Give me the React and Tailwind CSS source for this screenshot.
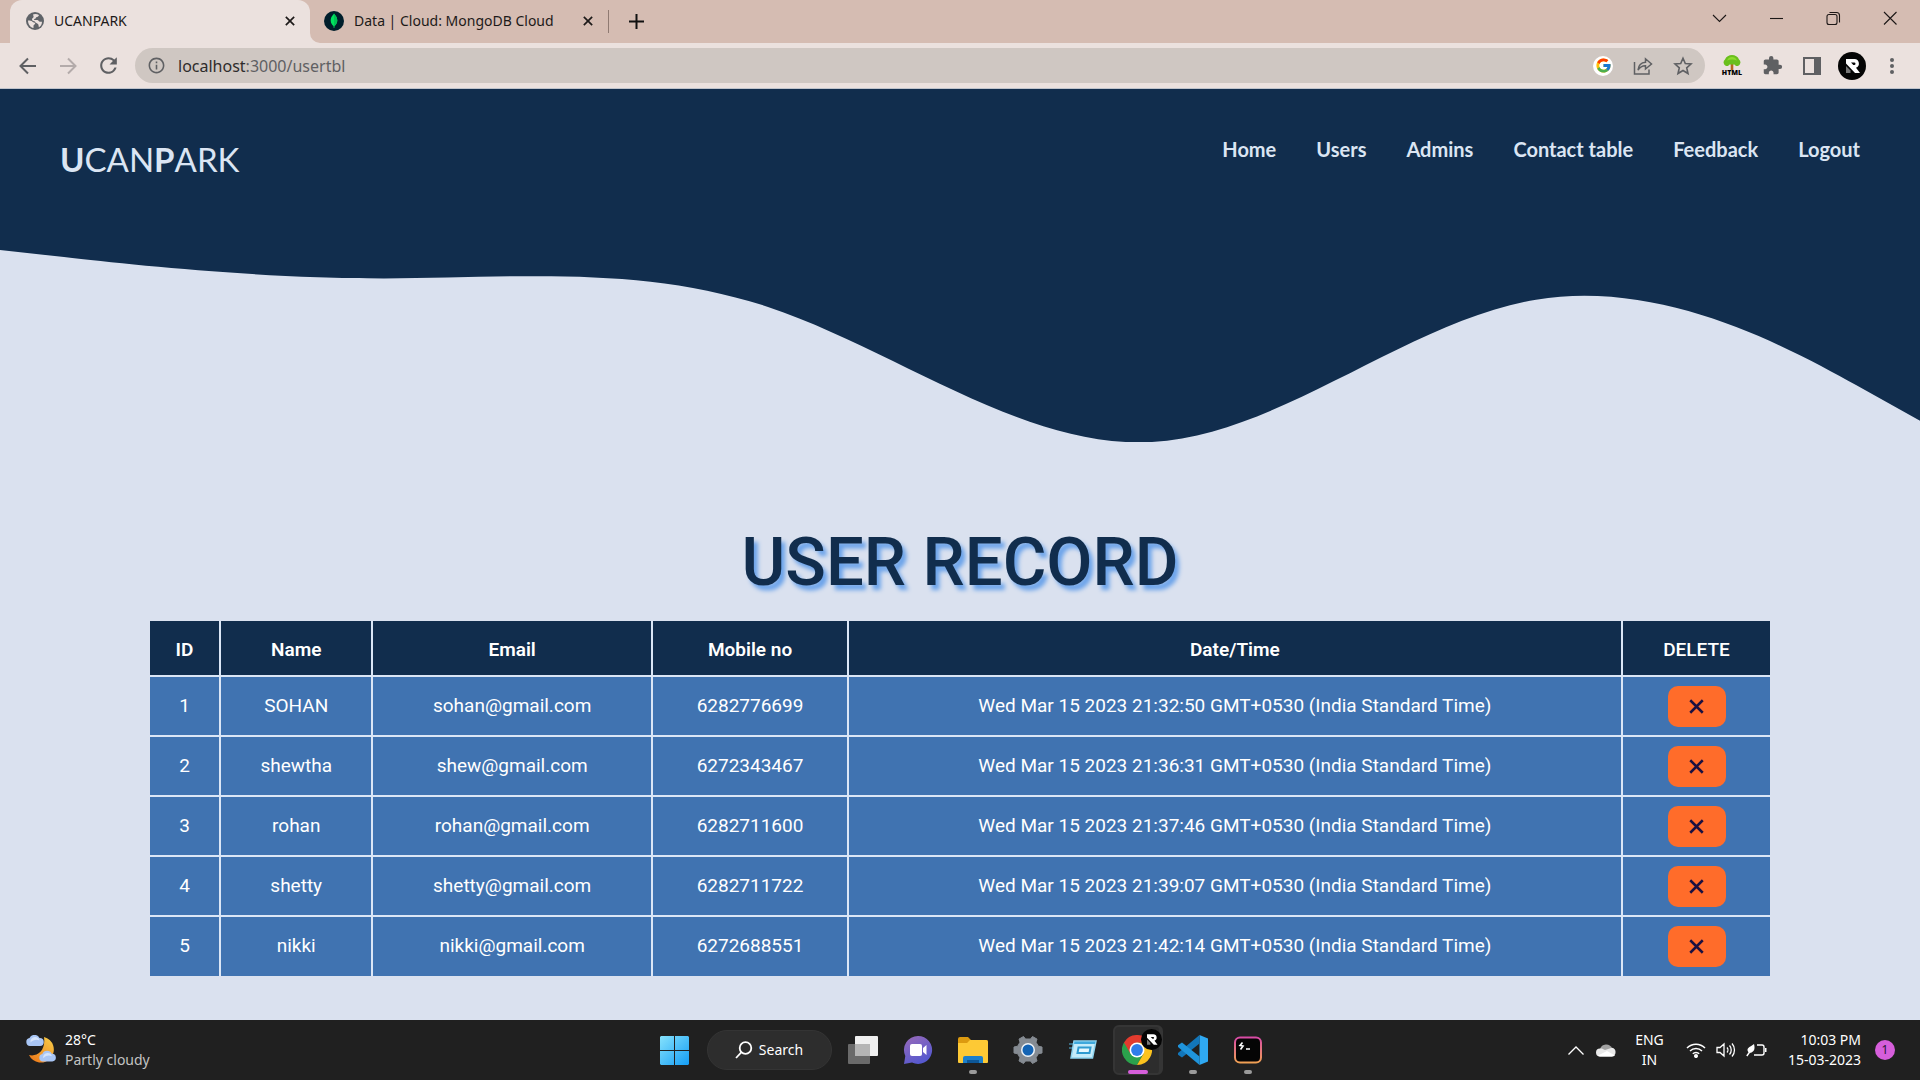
import React from "react";
import { FcGoogle } from "react-icons/fc";
import { MdExtension, MdRefresh, MdInfoOutline } from "react-icons/md";

const users = [
  { id: 1, name: "SOHAN", email: "sohan@gmail.com", mobile: "6282776699", time: "21:32:50" },
  { id: 2, name: "shewtha", email: "shew@gmail.com", mobile: "6272343467", time: "21:36:31" },
  { id: 3, name: "rohan", email: "rohan@gmail.com", mobile: "6282711600", time: "21:37:46" },
  { id: 4, name: "shetty", email: "shetty@gmail.com", mobile: "6282711722", time: "21:39:07" },
  { id: 5, name: "nikki", email: "nikki@gmail.com", mobile: "6272688551", time: "21:42:14" },
];

const links = ["Home", "Users", "Admins", "Contact table", "Feedback", "Logout"];

function Cross({ size = 12, width = 2, color = "currentColor" }) {
  return (
    <svg width={size} height={size} viewBox="0 0 12 12" fill="none" stroke={color} strokeWidth={width}>
      <path d="M1 1l10 10M11 1L1 11" />
    </svg>
  );
}

function Globe() {
  return (
    <svg width="18" height="18" viewBox="0 0 18 18">
      <circle cx="9" cy="9" r="9" fill="#5f6368" />
      <path d="M2 8.500c2 0 3.500.2 4.500 1.200.8.900 2.500.3 2.700 1.500.2 1.300-1.700 1.300-1.700 2.600V16C4.500 15.500 2 12.500 2 8.500z" fill="#ebe1de" />
      <path d="M7 2.500C8 2 11 1.700 13 3c-.5 1-.8 1.800-2 2-1.400.2-.8 1.500-2 1.700-1.200.2-1.200 1.300-.2 1.300h2.400c1.500 0 1.600 1.800 2.800 1.800H16c0 2.700-1.300 4.500-3 5.500-.6-1-.2-2.300-1-3.200-1-1-2.400-.8-2.800-2C8.800 8.700 6 9.400 6 7.500 6 6 7.600 6 7.600 4.500z" fill="#ebe1de" />
    </svg>
  );
}

function RMark({ size }) {
  return (
    <svg width={size} height={size} viewBox="0 0 28 28">
      <circle cx="14" cy="14" r="14" fill="#050505" />
      <path d="M8 7h8.500a4.500 4.500 0 0 1 1.500 8.700L22 21h-5L8 11.500z" fill="#fff" />
      <path d="M13 10.500h3.200a1.300 1.300 0 0 1 0 2.600h-.9z" fill="#050505" />
      <path d="M8 14l4.500 4.500V21H8z" fill="#777" />
    </svg>
  );
}

function Tab({ icon, title, active }) {
  return (
    <div
      className={
        active
          ? "relative flex w-[300px] items-center rounded-t-xl bg-[#ebe1de] pr-3 pb-0.5 pl-4"
          : "flex w-[298px] items-center pr-3 pb-0.5 pl-3.5"
      }
    >
      {icon}
      <span className="ml-2.5 flex-1 truncate text-sm">{title}</span>
      <button aria-label={"Close " + title} className="grid size-4 place-items-center">
        <Cross size={10} />
      </button>
      {active && (
        <svg className="absolute bottom-0 left-full" width="10" height="10" viewBox="0 0 10 10" fill="#ebe1de">
          <path d="M0 0v10h10A10 10 0 0 1 0 0z" />
        </svg>
      )}
    </div>
  );
}

function Tool({ label, children }) {
  return (
    <button aria-label={label} className="grid h-9 w-10 place-items-center">
      {children}
    </button>
  );
}

function WindowButton({ label, children }) {
  return (
    <button aria-label={label} className="grid h-9 w-[57px] place-items-center">
      <svg width="16" height="16" viewBox="0 0 16 16" fill="none" stroke="#1c1716" strokeWidth="1.100">
        {children}
      </svg>
    </button>
  );
}

function Browser() {
  return (
    <div className="font-['Noto_Sans',sans-serif] text-[#1d1a19]">
      <div className="flex h-[43px] bg-[#d5bcb2] pl-2.5">
        <Tab active title="UCANPARK" icon={<Globe />} />
        <Tab
          title="Data | Cloud: MongoDB Cloud"
          icon={
            <svg width="20" height="20" viewBox="0 0 20 20">
              <circle cx="10" cy="10" r="10" fill="#001e2b" />
              <path d="M10 2.500c1 1.700 3.300 3.300 3.300 7 0 3-1.800 4.600-2.900 5.500L10.200 17h-.5l-.2-2C8.400 14.100 6.700 12.500 6.700 9.500c0-3.700 2.300-5.300 3.300-7z" fill="#00e35f" />
              <path d="M10 2.500V17h.2l.2-2c1.100-.9 2.900-2.500 2.900-5.500 0-3.700-2.300-5.300-3.300-7z" fill="#00c455" />
            </svg>
          }
        />
        <span className="my-2.5 w-px bg-[#8f7a72]" />
        <button aria-label="New tab" className="grid w-[54px] place-items-center">
          <svg width="15" height="15" viewBox="0 0 15 15" stroke="#111" strokeWidth="2">
            <path d="M7.500 0v15M0 7.500h15" />
          </svg>
        </button>
        <div className="ml-auto flex pr-0.5">
          <WindowButton label="Search tabs"><path d="M2 5l6.500 6.500L15 5" /></WindowButton>
          <WindowButton label="Minimize"><path d="M2 8.500h13" /></WindowButton>
          <WindowButton label="Restore">
            <rect x="2" y="4.500" width="10" height="10" rx="2" />
            <path d="M4.500 2.500h7a3 3 0 0 1 3 3v7" />
          </WindowButton>
          <WindowButton label="Close"><path d="M2 2l12.500 12.500M14.500 2L2 14.500" /></WindowButton>
        </div>
      </div>
      <div className="flex h-[46px] items-center border-b border-[#bfc3cb] bg-[#ebe1de] px-2 text-[#5f6063]">
        <Tool label="Back">
          <svg width="18" height="18" viewBox="0 0 18 18" fill="none" stroke="currentColor" strokeWidth="2"><path d="M17 9H2M9 1.500L1.500 9 9 16.500" /></svg>
        </Tool>
        <Tool label="Forward">
          <svg width="18" height="18" viewBox="0 0 18 18" fill="none" stroke="#b3abaa" strokeWidth="2"><path d="M1 9h15M9 1.500L16.500 9 9 16.500" /></svg>
        </Tool>
        <Tool label="Reload"><MdRefresh size={25} /></Tool>
        <div className="ml-[7px] flex h-[35px] flex-1 items-center rounded-full bg-[#cfc7c2] pr-0.5">
          <MdInfoOutline size={19} className="ml-3 shrink-0" />
          <div className="ml-3 flex-1 text-base">
            <span className="text-[#2e2c2c]">localhost</span>:3000/usertbl
          </div>
          <Tool label="Search with Google">
            <span className="grid size-5 place-items-center rounded-full bg-white"><FcGoogle size={17} /></span>
          </Tool>
          <Tool label="Share">
            <svg width="20" height="20" viewBox="0 0 20 20" fill="none" stroke="currentColor" strokeWidth="1.500">
              <path d="M1.500 6v12H16v-4.500" />
              <path d="M5 14c.5-5 3.500-7.500 7.500-7.800V2.800L18.500 8l-6 5V9.800C9.500 9.700 7 11 5 14z" />
            </svg>
          </Tool>
          <Tool label="Bookmark">
            <svg width="20" height="20" viewBox="0 0 20 20" fill="none" stroke="currentColor" strokeWidth="1.600">
              <path d="M10 2.200l2.300 5.300 5.700.5-4.300 3.800 1.300 5.700-5-3-5 3 1.300-5.700L2 8l5.700-.5z" />
            </svg>
          </Tool>
        </div>
        <div className="ml-[7px] flex items-center">
          <button aria-label="HTML Tree extension" className="flex h-9 w-10 flex-col items-center justify-center">
            <svg width="20" height="15" viewBox="0 0 20 15">
              <path d="M8.700 7h2.600v8H8.700z" fill="#b5651d" />
              <path d="M4 11a3.800 3.800 0 0 1-1-6.500C4 1.500 7 0 10 0s6 1.500 7 4.500A3.800 3.800 0 0 1 16 11c-2 .4-3-.6-3.500-1.500h-5C7 10.400 6 11.400 4 11z" fill="#6abf1c" />
              <path d="M5 5.500C6 3 8 2 10 2s4 1 5 3.500c-3-1.200-7-1.200-10 0z" fill="#8ddb2e" />
            </svg>
            <span className="text-[7px] leading-[6px] font-black text-black">HTML</span>
          </button>
          <Tool label="Extensions"><MdExtension size={21} /></Tool>
          <Tool label="Side panel">
            <svg width="18" height="18" viewBox="0 0 18 18"><path d="M1 1h16v16H1z" fill="none" stroke="currentColor" strokeWidth="2" /><path d="M11 1h6v16h-6z" fill="currentColor" /></svg>
          </Tool>
          <Tool label="Profile"><RMark size={28} /></Tool>
          <Tool label="Menu">
            <svg width="4" height="18" viewBox="0 0 4 18" fill="currentColor"><circle cx="2" cy="3" r="2" /><circle cx="2" cy="9" r="2" /><circle cx="2" cy="15" r="2" /></svg>
          </Tool>
        </div>
      </div>
    </div>
  );
}

const headings = ["ID", "Name", "Email", "Mobile no", "Date/Time", "DELETE"];

function Page() {
  return (
    <main className="flex-1 bg-[#dae1ef] pb-11 font-[Roboto,sans-serif]">
      <header className="flex h-[129px] items-start justify-between bg-[#112d4d] px-15 font-[Lato,sans-serif] text-[#dbe5f3]">
        <a href="#home" className="mt-12 text-[33px] leading-[44px]">
          <b>U</b>CAN<b>P</b>ARK
        </a>
        <nav className="mt-12 flex gap-10 text-xl leading-6 font-bold">
          {links.map((l) => (
            <a key={l} href={"#" + l.toLowerCase().replace(" ", "-")}>{l}</a>
          ))}
        </nav>
      </header>
      <svg className="block w-full" viewBox="0 40 1440 168" fill="#112d4d" aria-hidden="true">
        <path d="M0 64L48 69.300C96 74.700 192 85.300 288 85.300S480 74.700 576 106.700C672 138.700 768 213.300 864 208S1056 117.300 1152 101.300C1248 85.300 1344 138.700 1392 165.300L1440 192V39H0z" />
      </svg>
      <h1 className="mt-20 text-center text-[67px] leading-20 font-medium text-[#112d4d] [text-shadow:4px_5px_4px_#6ba3ea]">
        USER RECORD
      </h1>
      <table className="mx-auto mt-[19px] w-[84.4%] table-fixed border-collapse text-center text-[19px] text-white">
        <colgroup>
          <col className="w-[4.35%]" />
          <col className="w-[9.38%]" />
          <col className="w-[17.27%]" />
          <col className="w-[12.09%]" />
          <col className="w-[47.75%]" />
          <col className="w-[9.16%]" />
        </colgroup>
        <thead>
          <tr className="h-[55px] divide-x-2 divide-[#dbe6f6] bg-[#112d4d]">
            {headings.map((h) => (
              <th key={h} scope="col" className={h === "DELETE" ? "pt-1 font-medium" : "pt-1 font-semibold"}>{h}</th>
            ))}
          </tr>
        </thead>
        <tbody>
          {users.map((u) => (
            <tr key={u.id} className="h-[60px] divide-x-2 divide-[#dbe6f6] border-t-2 border-[#dbe6f6] bg-[#4073b1]">
              <td>{u.id}</td>
              <td>{u.name}</td>
              <td>{u.email}</td>
              <td>{u.mobile}</td>
              <td>Wed Mar 15 2023 {u.time} GMT+0530 (India Standard Time)</td>
              <td>
                <button aria-label={"Delete " + u.name} className="mx-auto grid h-[41px] w-[58px] place-items-center rounded-[10px] bg-[#ff6c2a]">
                  <Cross size={15} width={2} color="#1b1140" />
                </button>
              </td>
            </tr>
          ))}
        </tbody>
      </table>
    </main>
  );
}

function TaskIcon({ label, dot, children }) {
  return (
    <button aria-label={label} className="relative grid h-15 w-[55px] place-items-center">
      {children}
      {dot && <span className="absolute bottom-1.5 left-1/2 h-1 w-2 -translate-x-1/2 rounded-full bg-[#9a9a9a]" />}
    </button>
  );
}

function SmallCloud({ x, y, s = 1 }) {
  return (
    <g transform={`translate(${x} ${y}) scale(${s})`}>
      <path d="M4 11a4 4 0 0 1-.5-7.900A5.500 5.500 0 0 1 13.500 3 4 4 0 0 1 14 11z" fill="#a9c6f5" />
      <path d="M4.500 7.500A4.500 4.500 0 0 1 9 2a4.500 4.500 0 0 1 4.500 3.500c-3-1.200-6-.8-9 2z" fill="#d5e4fc" />
    </g>
  );
}

function Taskbar() {
  return (
    <footer className="grid h-15 grid-cols-[1fr_auto_1fr] bg-[#202020] font-['Noto_Sans',sans-serif] text-sm text-white">
      <button className="flex items-center justify-self-start pl-[26px] text-left leading-5">
        <svg width="30" height="30" viewBox="0 0 30 30">
          <defs>
            <linearGradient id="moon" x1="1" y1="0" x2="0.300" y2="1">
              <stop stopColor="#f7d04a" />
              <stop offset="1" stopColor="#ee7f1d" />
            </linearGradient>
          </defs>
          <path d="M18 2a13 13 0 1 1-15 18c8 2 17-4 15-18z" fill="url(#moon)" />
          <SmallCloud x={0} y={0} />
          <SmallCloud x={13} y={16} s={0.95} />
        </svg>
        <span className="ml-[9px]">
          <span className="block">28°C</span>
          <span className="block text-[#c3c3c3]">Partly cloudy</span>
        </span>
      </button>

      <div className="flex items-center pl-0.5">
        <TaskIcon label="Start">
          <svg width="29" height="29" viewBox="0 0 29 29">
            <defs>
              <linearGradient id="win" x1="0" y1="0" x2="1" y2="1">
                <stop stopColor="#86e2fc" />
                <stop offset="1" stopColor="#149df5" />
              </linearGradient>
            </defs>
            <path d="M1 0h13v14H0V1zM15 0h13l1 1v13H15zM0 15h14v14H1l-1-1zM15 15h14v13l-1 1H15z" fill="url(#win)" />
          </svg>
        </TaskIcon>
        <button className="mr-1 ml-[5px] flex h-10 w-[125px] items-center justify-center rounded-full border border-[#343434] bg-[#2d2d2d]">
          <svg width="18" height="18" viewBox="0 0 18 18" fill="none" stroke="#fff" strokeWidth="1.800">
            <circle cx="10.500" cy="7" r="5.800" />
            <path d="M6.500 11.200L1 17" />
          </svg>
          <span className="ml-1.5">Search</span>
        </button>
        <TaskIcon label="Task view">
          <svg width="30" height="28" viewBox="0 0 30 28">
            <rect x="7" y="0" width="23" height="20" rx="1" fill="#f0f0f0" />
            <rect x="0" y="8" width="22" height="20" rx="1" fill="#6a6a6a" />
            <path d="M7 8h15v12H7z" fill="#b5b5b5" />
          </svg>
        </TaskIcon>
        <TaskIcon label="Chat">
          <svg width="30" height="30" viewBox="0 0 30 30">
            <defs>
              <linearGradient id="chat" x1="0" y1="0" x2="0.500" y2="1">
                <stop stopColor="#9a6ab8" />
                <stop offset="1" stopColor="#5659cf" />
              </linearGradient>
            </defs>
            <path d="M15 1a14 14 0 1 1-6 26.600L1 29l1.300-8A14 14 0 0 1 15 1z" fill="url(#chat)" />
            <rect x="7" y="9" width="12" height="12" rx="2" fill="#fff" />
            <path d="M20 13l3.500-3v10L20 17z" fill="#fff" />
          </svg>
        </TaskIcon>
        <TaskIcon label="File Explorer" dot>
          <svg width="30" height="28" viewBox="0 0 30 28">
            <path d="M0 3a2 2 0 0 1 2-2h8l3 3h15a2 2 0 0 1 2 2v4H0z" fill="#dc9a10" />
            <path d="M0 7h9l3-3h16a2 2 0 0 1 2 2v20a1 1 0 0 1-1 1H1a1 1 0 0 1-1-1z" fill="#fdc935" />
            <path d="M5 27v-5a2 2 0 0 1 2-2h16a2 2 0 0 1 2 2v5z" fill="#1b7fcb" />
            <path d="M9 24h12v3H9z" fill="#0d5797" />
          </svg>
        </TaskIcon>
        <TaskIcon label="Settings">
          <svg width="30" height="30" viewBox="0 0 30 30">
            <path
              d="M10.500 1.500l2 2.500h5l2-2.500 4.500 2.600-1 3.100 2.300 4 3.700.8v6l-3.700.8-2.300 4 1 3.100-4.500 2.600-2-2.500h-5l-2 2.500L6 25.900l1-3.100-2.300-4L1 18v-6l3.700-.8 2.300-4-1-3.100z"
              fill="#858b92" stroke="#858b92" strokeWidth="1" strokeLinejoin="round"
            />
            <circle cx="15" cy="15" r="7" fill="#eef3f8" />
            <circle cx="15" cy="15" r="5.500" fill="#1464b4" />
          </svg>
        </TaskIcon>
        <TaskIcon label="Run">
          <svg width="28" height="20" viewBox="0 0 28 20">
            <path d="M5 1h22l-3.500 17H2z" fill="#c5ecfa" stroke="#8fd4ef" strokeWidth="1.500" />
            <path d="M5.500 1.500h21l-.7 2.500H5z" fill="#3fa9dc" />
            <path d="M9.500 7.500h12l-1 5.500h-12z" fill="#e6f8fe" stroke="#2f9bd0" strokeWidth="2" />
            <path d="M0 4h4M0 8h3" stroke="#55b5dd" />
          </svg>
        </TaskIcon>
        <button aria-label="Google Chrome" className="relative grid h-15 w-[55px] place-items-center">
          <span className="grid h-[50px] w-[50px] place-items-center rounded-md border-2 border-r-4 border-[#353535] bg-[#2d2d2d]">
            <svg width="30" height="30" viewBox="0 0 30 30">
              <path d="M2 7.500A15 15 0 0 0 15 30l6.500-11.250L15 15z" fill="#2ba24c" />
              <path d="M28 7.500A15 15 0 0 1 15 30l6.500-11.250L15 7.500z" fill="#fcc31e" />
              <path d="M2 7.500l6.500 11.250 3-7.750L15 7.500h13A15 15 0 0 0 2 7.500z" fill="#e33b2e" />
              <circle cx="15" cy="15" r="7.500" fill="#fff" />
              <circle cx="15" cy="15" r="5.900" fill="#2f7de9" />
            </svg>
          </span>
          <span className="absolute top-[9px] right-1"><RMark size={21} /></span>
          <span className="absolute bottom-1.5 left-1/2 h-1 w-5 -translate-x-1/2 rounded-full bg-[#d65edb]" />
        </button>
        <TaskIcon label="Visual Studio Code" dot>
          <svg width="30" height="30" viewBox="0 0 30 30">
            <path d="M21.500 0L30 3.500v23L21.500 30z" fill="#2fa9f2" />
            <path d="M21.500 0v8.500L4 22.500l-4-2.700 0-1.800z" fill="#1276ba" />
            <path d="M21.500 30v-8.500L4 7.500l-4 2.700 0 1.800z" fill="#1f94dc" />
          </svg>
        </TaskIcon>
        <TaskIcon label="Terminal" dot>
          <svg width="28" height="28" viewBox="0 0 28 28">
            <defs>
              <linearGradient id="term" x1="0" y1="0" x2="0" y2="1">
                <stop stopColor="#d94ba6" />
                <stop offset="1" stopColor="#f0a054" />
              </linearGradient>
            </defs>
            <rect x="1" y="1.500" width="26" height="25" rx="5" fill="#050505" stroke="url(#term)" strokeWidth="2" />
            <path d="M8.500 6.500L6 9.500l3 .5-2.500 3.500M12 13h4" fill="none" stroke="#fff" strokeWidth="1.600" />
          </svg>
        </TaskIcon>
      </div>

      <div className="flex items-center justify-self-end pr-[25px]">
        <button aria-label="Show hidden icons" className="grid w-[30px] place-items-center">
          <svg width="16" height="9" viewBox="0 0 16 9" fill="none" stroke="#fff" strokeWidth="1.300"><path d="M.5 8.500L8 1l7.500 7.500" /></svg>
        </button>
        <button aria-label="OneDrive" className="grid w-[30px] place-items-center">
          <svg width="20" height="14" viewBox="0 0 20 14">
            <path d="M4 6a6.500 6.500 0 0 1 12-1l-6 6z" fill="#a2a2a2" />
            <path d="M4 13.500A4 4 0 0 1 4 5.500c2-.3 3 .3 5 1.500l7-2.300a4.500 4.500 0 0 1 0 8.800z" fill="#e9e9e9" />
            <path d="M2 12.500L11 8l8 4.500c-.8.700-1.800 1-3 1H4c-.8 0-1.500-.4-2-1z" fill="#fff" />
          </svg>
        </button>
        <button className="mr-2 w-[57px] text-center leading-5">ENG<br />IN</button>
        <button aria-label="Network, sound and battery" className="flex items-center gap-2.5">
          <svg width="20" height="16" viewBox="0 0 20 16" fill="none" stroke="#fff" strokeWidth="1.500">
            <path d="M1 6a12.700 12.700 0 0 1 18 0M4 9a8.500 8.500 0 0 1 12 0M6.800 11.800a4.500 4.500 0 0 1 6.400 0" />
            <circle cx="10" cy="14" r="1.300" fill="#fff" />
          </svg>
          <svg width="20" height="16" viewBox="0 0 20 16" fill="none" stroke="#fff" strokeWidth="1.300">
            <path d="M1 5.500h3L8 2v12l-4-3.500H1zM11 5.500c1.200 1.300 1.200 3.700 0 5M13.500 3.500c2.300 2.500 2.300 6.500 0 9M16 1.500c3.300 3.700 3.300 9.300 0 13" />
          </svg>
          <svg width="21" height="16" viewBox="0 0 21 16" fill="none" stroke="#fff" strokeWidth="1.400">
            <path d="M11 3h5a2 2 0 0 1 2 2v6a2 2 0 0 1-2 2H8" />
            <path d="M19 6h1.500v4H19z" fill="#fff" stroke="none" />
            <path d="M8 2c1 4 .8 7-2.500 8.500C3.500 11.300 1.500 10 1.500 8 1.500 5 5.500 4.500 8 2z" fill="#fff" stroke="none" />
            <path d="M4 9.500L.8 14" />
          </svg>
        </button>
        <button className="ml-3.5 w-20 text-right leading-5">10:03 PM<br />15-03-2023</button>
        <button aria-label="1 notification" className="ml-3.5 grid size-5 place-items-center rounded-full bg-[#d65edb] text-xs text-[#2a1530]">
          1
        </button>
      </div>
    </footer>
  );
}

export default function App() {
  return (
    <div className="flex min-h-screen flex-col">
      <Browser />
      <Page />
      <Taskbar />
    </div>
  );
}
